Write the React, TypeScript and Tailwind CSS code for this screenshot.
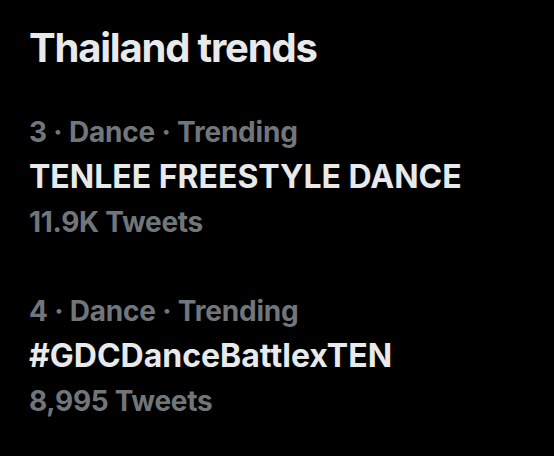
type Trend = {
  rank: number;
  category: string;
  name: string;
  count: string;
};

const trends: Trend[] = [
  { rank: 3, category: 'Dance', name: 'TENLEE FREESTYLE DANCE', count: '11.9K Tweets' },
  { rank: 4, category: 'Dance', name: '#GDCDanceBattlexTEN', count: '8,995 Tweets' },
];

function TrendRow({ trend }: { trend: Trend }) {
  return (
    <div className="relative flex flex-col">
      <div className="text-[28px] leading-[44px] font-bold tracking-[-0.2px] text-[#71767b]">
        {trend.rank} · {trend.category} · Trending
      </div>
      <div className="text-[32px] leading-[46px] font-bold text-[#e7e9ea]">{trend.name}</div>
      <div className="text-[28px] leading-[44px] font-bold tracking-[-0.3px] text-[#71767b]">{trend.count}</div>
      {/* more-menu icon, cut off at the right edge */}
      <div className="absolute right-[-14px] top-[18px] flex gap-[3px]">
        <span className="w-[5px] h-[5px] rounded-full bg-[#71767b]" />
        <span className="w-[5px] h-[5px] rounded-full bg-[#71767b]" />
      </div>
    </div>
  );
}

export default function App() {
  return (
    <div
      className="w-[554px] h-[456px] bg-black overflow-hidden pl-[29px] pt-[24px]"
      style={{ fontFamily: 'Inter, "Noto Sans", sans-serif' }}
    >
      <h1 className="text-[40px] leading-[48px] font-bold tracking-[-1.2px] text-[#e7e9ea]">Thailand trends</h1>
      <div className="mt-[38px] flex flex-col gap-[45px]">
        {trends.map((t) => (
          <TrendRow key={t.rank} trend={t} />
        ))}
      </div>
    </div>
  );
}
